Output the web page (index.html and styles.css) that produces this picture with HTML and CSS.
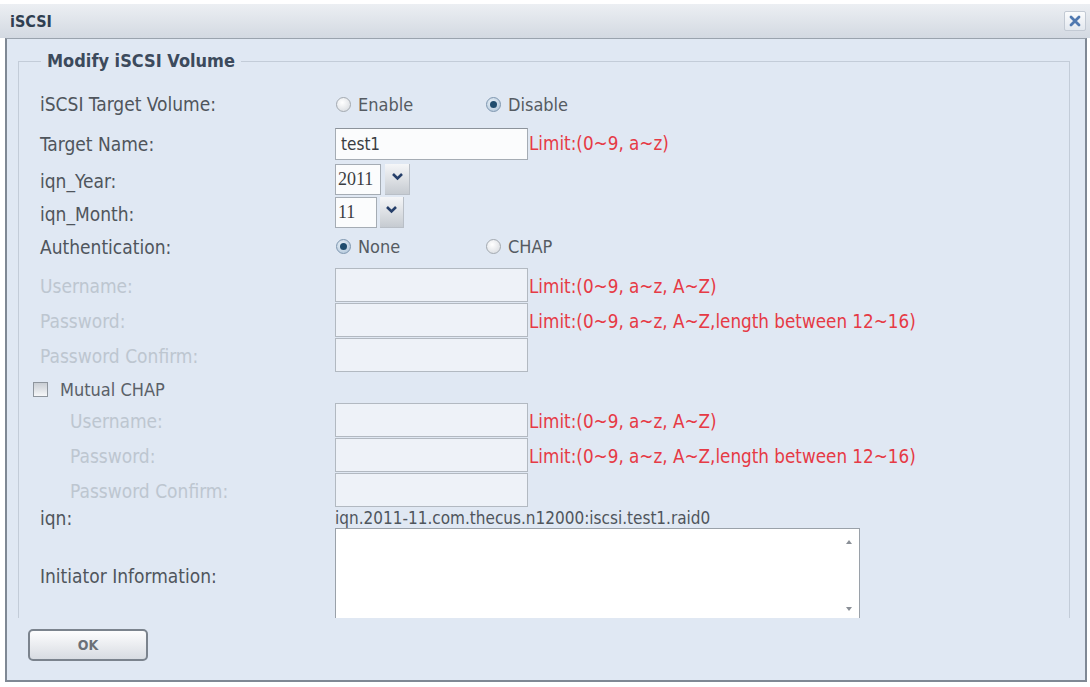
FILE: index.html
```html
<!DOCTYPE html>
<html lang="en">
<head>
  <meta charset="UTF-8">
  <title>iSCSI</title>
  <link rel="stylesheet" href="styles.css">
</head>
<body>

  <div class="titlebar">
    <span class="title">iSCSI</span>
    <span class="close">
      <svg width="14" height="14" viewBox="0 0 14 14"><path d="M3 3 L11 11 M11 3 L3 11" stroke="#4f78b0" stroke-width="2.8" stroke-linecap="round"/></svg>
    </span>
  </div>

  <div class="dialog">
    <div class="scroll">
      <fieldset class="group">
        <legend>Modify iSCSI Volume</legend>

        <div class="row row-radio">
          <span class="label">iSCSI Target Volume:</span>
          <span class="radio-set">
            <label class="opt"><span class="radio"></span>Enable</label>
            <label class="opt"><span class="radio checked"></span>Disable</label>
          </span>
        </div>

        <div class="row row-name">
          <span class="label">Target Name:</span>
          <span class="field"><span class="text-value">test1</span></span>
          <span class="limit">Limit:(0~9, a~z)</span>
        </div>

        <div class="row row-year">
          <span class="label">iqn_Year:</span>
          <span class="select"><span class="select-value year">2011</span><span class="arrow"><svg width="13" height="9" viewBox="0 0 13 9"><path d="M2 2 L6.5 6.5 L11 2" fill="none" stroke="#263f6a" stroke-width="2.6"/></svg></span></span>
        </div>

        <div class="row row-month">
          <span class="label">iqn_Month:</span>
          <span class="select"><span class="select-value month">11</span><span class="arrow"><svg width="13" height="9" viewBox="0 0 13 9"><path d="M2 2 L6.5 6.5 L11 2" fill="none" stroke="#263f6a" stroke-width="2.6"/></svg></span></span>
        </div>

        <div class="row row-auth">
          <span class="label">Authentication:</span>
          <span class="radio-set">
            <label class="opt"><span class="radio checked"></span>None</label>
            <label class="opt"><span class="radio"></span>CHAP</label>
          </span>
        </div>

        <div class="row">
          <span class="label disabled">Username:</span>
          <span class="field off"></span>
          <span class="limit">Limit:(0~9, a~z, A~Z)</span>
        </div>
        <div class="row">
          <span class="label disabled">Password:</span>
          <span class="field off"></span>
          <span class="limit">Limit:(0~9, a~z, A~Z,length between 12~16)</span>
        </div>
        <div class="row">
          <span class="label disabled">Password Confirm:</span>
          <span class="field off"></span>
        </div>

        <div class="row row-check">
          <label class="check"><span class="box"></span>Mutual CHAP</label>
        </div>

        <div class="row sub">
          <span class="label disabled">Username:</span>
          <span class="field off"></span>
          <span class="limit">Limit:(0~9, a~z, A~Z)</span>
        </div>
        <div class="row sub">
          <span class="label disabled">Password:</span>
          <span class="field off"></span>
          <span class="limit">Limit:(0~9, a~z, A~Z,length between 12~16)</span>
        </div>
        <div class="row sub">
          <span class="label disabled">Password Confirm:</span>
          <span class="field off"></span>
        </div>

        <div class="row row-iqn">
          <span class="label">iqn:</span>
          <span class="iqn">iqn.2011-11.com.thecus.n12000:iscsi.test1.raid0</span>
        </div>

        <div class="row row-area">
          <span class="label">Initiator Information:</span>
          <span class="textarea">
            <span class="scrollbar">
              <svg width="8" height="6" viewBox="0 0 8 6"><path d="M1 5 L4 1 L7 5 Z" fill="#8a8f96"/></svg>
              <svg width="8" height="6" viewBox="0 0 8 6"><path d="M1 1 L4 5 L7 1 Z" fill="#8a8f96"/></svg>
            </span>
          </span>
        </div>
      </fieldset>
    </div>

    <div class="footer">
      <button class="ok">OK</button>
    </div>
  </div>

</body>
</html>
```

FILE: styles.css
```css
body {
  margin: 0;
  background-color: #fff;
  font-family: "DejaVu Sans Condensed", "DejaVu Sans", sans-serif;
  font-size: 19px;
  color: #4f555c;
}

.titlebar {
  margin-top: 4px;
  height: 34px;
  display: flex;
  align-items: center;
  justify-content: space-between;
  padding: 0 4px 0 10px;
  background: linear-gradient(#eceff3, #d3d9e2);
}

.title {
  font-family: "DejaVu Sans Condensed", "DejaVu Sans", sans-serif;
  font-weight: bold;
  font-size: 16px;
  color: #2f3e50;
}

.close {
  width: 20px;
  height: 18px;
  display: flex;
  align-items: center;
  justify-content: center;
  background: linear-gradient(#fbfcfd, #e3e8ef);
  border: 1px solid #c3cad4;
  border-radius: 2px;
}

.dialog {
  margin: 0 3px 0 5px;
  height: 641px;
  border: 2px solid #7f8894;
  border-top: 1px solid #9aa3ae;
  background-color: #e0e8f3;
  display: flex;
  flex-direction: column;
}

.scroll {
  height: 579px;
  box-sizing: border-box;
  flex-shrink: 0;
  overflow: hidden;
  padding: 12px 15px 0 11px;
}

.group {
  margin: 0;
  padding: 13px 20px 0 21px;
  border: 1px solid #c3ccd8;
  border-bottom: none;
  min-height: 600px;
}

.group legend {
  margin-left: 1px;
  padding: 0 6px;
  font-weight: bold;
  font-size: 18px;
  line-height: 20px;
  color: #3c4a5c;
}

.row {
  display: flex;
  align-items: flex-end;
  height: 35px;
}

.row-radio { height: 40px; align-items: center; }
.row-name { height: 38px; padding-bottom: 2px; box-sizing: border-box; }
.row-year { height: 34px; }
.row-month { height: 33px; }
.row-auth { height: 38px; align-items: center; padding-bottom: 3px; box-sizing: border-box; }
.row-check { height: 30px; align-items: center; padding-top: 4px; box-sizing: border-box; }
.row-iqn { height: 21px; align-items: center; }
.row-area { height: 92px; align-items: stretch; }

.row .label,
.row .limit {
  align-self: center;
  padding-top: 3px;
}

.row-radio .label,
.row-auth .label,
.row-iqn .label {
  padding-top: 0;
}

.row-area .label {
  padding-top: 4px;
}

.label {
  width: 295px;
  flex-shrink: 0;
  color: #4f555c;
}

.sub .label {
  width: 265px;
  padding-left: 30px;
}

.label.disabled {
  color: #bdc6d0;
}

.radio-set {
  display: flex;
}

.opt {
  width: 150px;
  display: flex;
  align-items: center;
  font-size: 18px;
  color: #555b62;
}

.radio {
  width: 15px;
  height: 15px;
  margin: 0 7px 0 1px;
  border: 1px solid #a3a9b0;
  border-radius: 50%;
  background: radial-gradient(circle at 40% 35%, #ffffff, #d4d8dd);
  box-sizing: border-box;
  position: relative;
}

.radio.checked {
  border-color: #7f97b0;
  background: radial-gradient(circle at 40% 35%, #e9f1f8, #a9c0d6);
}

.radio.checked::after {
  content: '';
  position: absolute;
  left: 3px;
  top: 3px;
  width: 7px;
  height: 7px;
  border-radius: 50%;
  background: #1f4c6e;
}

.field {
  width: 193px;
  height: 34px;
  flex-shrink: 0;
  box-sizing: border-box;
  border: 1px solid #a5acb4;
  border-top-color: #8c939b;
  background-color: #fbfcfd;
  display: flex;
  align-items: center;
  padding-left: 5px;
}

.row-name .field {
  height: 32px;
}

.field.off {
  background-color: #eef2f8;
  border-color: #b2b9c1;
}

.text-value {
  font-size: 17px;
  color: #3a3d42;
}

.limit {
  font-size: 18.7px;
  color: #e63a45;
  padding-left: 1px;
}

.select {
  display: flex;
  height: 31px;
  margin-bottom: 1px;
}

.select-value {
  box-sizing: border-box;
  border: 1px solid #a5acb4;
  background-color: #fbfcfd;
  display: flex;
  align-items: center;
  padding-left: 2px;
  font-family: "Liberation Serif", serif;
  font-size: 18px;
  color: #3a3d42;
}

.select-value.year { width: 46px; }
.select-value.month { width: 42px; }

.arrow {
  width: 25px;
  margin-left: 4px;
  box-sizing: border-box;
  border-right: 1px solid #b9bfc7;
  border-bottom: 1px solid #b9bfc7;
  background: linear-gradient(#f5f6f8, #c6cbd1);
  display: flex;
  align-items: center;
  justify-content: center;
  padding-bottom: 6px;
}

.month + .arrow { margin-left: 3px; width: 24px; }

.check {
  display: flex;
  align-items: center;
  margin-left: -7px;
  font-size: 18px;
  color: #5a6068;
}

.box {
  width: 15px;
  height: 15px;
  margin-right: 12px;
  box-sizing: border-box;
  border: 1px solid #8e959d;
  background: linear-gradient(#c9ced4, #f6f7f9);
}

.iqn {
  font-size: 17px;
  color: #4f555c;
}

.textarea {
  width: 525px;
  box-sizing: border-box;
  border: 1px solid #9aa1a9;
  border-bottom: none;
  background-color: #fff;
  display: flex;
  justify-content: flex-end;
}

.scrollbar {
  width: 20px;
  display: flex;
  flex-direction: column;
  justify-content: space-between;
  align-items: center;
  padding: 10px 0 8px;
}

.footer {
  flex: 1;
  padding: 11px 0 0 21px;
}

.ok {
  width: 120px;
  height: 32px;
  border: 2px solid #7b838d;
  border-radius: 5px;
  background: linear-gradient(#fdfdfe, #d8dce2);
  font-family: "DejaVu Sans Condensed", "DejaVu Sans", sans-serif;
  font-weight: bold;
  font-size: 14px;
  color: #6b7077;
}
```
